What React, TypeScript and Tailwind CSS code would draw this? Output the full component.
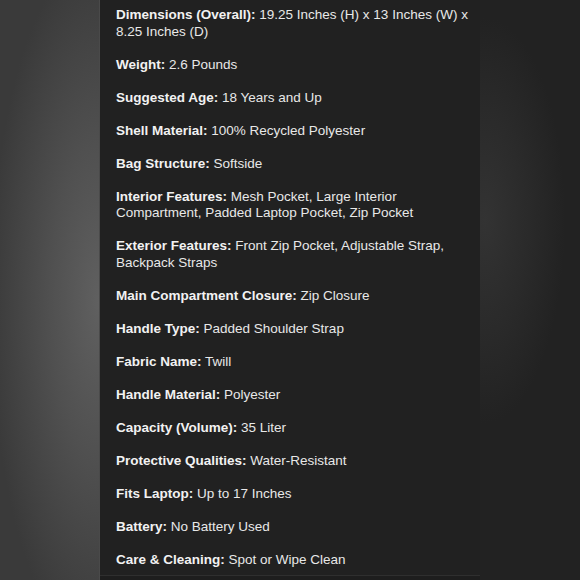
import React from "react";

const specs: [string, string][] = [
  ["Dimensions (Overall):", "19.25 Inches (H) x 13 Inches (W) x 8.25 Inches (D)"],
  ["Weight:", "2.6 Pounds"],
  ["Suggested Age:", "18 Years and Up"],
  ["Shell Material:", "100% Recycled Polyester"],
  ["Bag Structure:", "Softside"],
  ["Interior Features:", "Mesh Pocket, Large Interior Compartment, Padded Laptop Pocket, Zip Pocket"],
  ["Exterior Features:", "Front Zip Pocket, Adjustable Strap, Backpack Straps"],
  ["Main Compartment Closure:", "Zip Closure"],
  ["Handle Type:", "Padded Shoulder Strap"],
  ["Fabric Name:", "Twill"],
  ["Handle Material:", "Polyester"],
  ["Capacity (Volume):", "35 Liter"],
  ["Protective Qualities:", "Water-Resistant"],
  ["Fits Laptop:", "Up to 17 Inches"],
  ["Battery:", "No Battery Used"],
  ["Care & Cleaning:", "Spot or Wipe Clean"],
];

export default function App() {
  return (
    <div className="w-[580px] h-[580px] flex overflow-hidden font-['Liberation_Sans',Arial,sans-serif]">
      <div className="w-[100px] h-full bg-[radial-gradient(ellipse_110%_60%_at_100%_52%,#606060_0%,#505050_45%,#3a3a3a_100%)] border-r border-[#4a4a4a]" />
      <div className="w-[380px] h-full flex flex-col bg-[#1e1e1e]">
        <div className="h-[576px] bg-[#212121] border-b border-[#2f2f2f] pt-[7px] pl-4 pr-[10px] flex flex-col gap-[16.5px]">
          {specs.map(([k, v]) => (
            <p key={k} className="text-[13.5px] leading-[16.5px] text-[#e8e8e8]">
              <span className="font-bold text-[#f2f2f2]">{k}</span> {v}
            </p>
          ))}
        </div>
      </div>
      <div className="w-[100px] h-full bg-[radial-gradient(ellipse_80%_35%_at_5%_38%,#333333_0%,#2a2a2a_55%,#222222_100%)]" />
    </div>
  );
}
